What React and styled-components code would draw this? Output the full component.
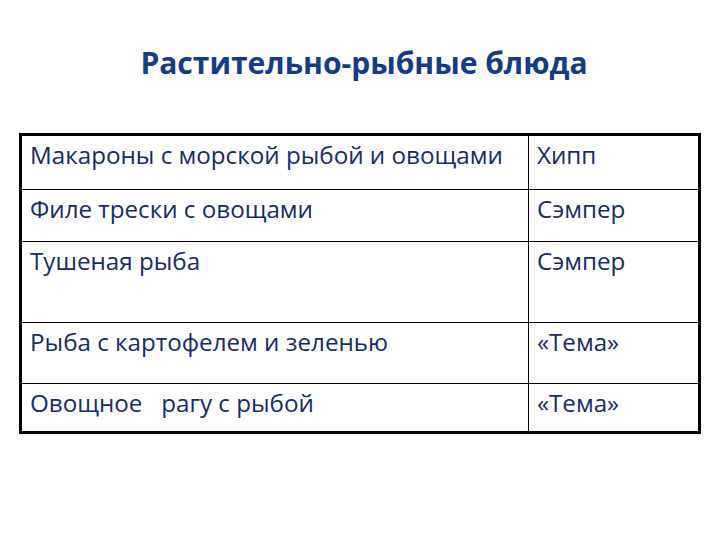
import React from "react";
import styled, { createGlobalStyle } from "styled-components";

const Global = createGlobalStyle`
  html, body { margin: 0; padding: 0; background: #ffffff; }
  body { font-family: "Open Sans", "Noto Sans", sans-serif; }
`;

const Page = styled.div`
  width: 720px;
  height: 540px;
  box-sizing: border-box;
  padding: 43px 19px 0 19px;
  display: flex;
  flex-direction: column;
  align-items: flex-start;
`;

const Title = styled.h1`
  margin: 0 0 50px 0;
  align-self: stretch;
  text-align: center;
  font-family: "Open Sans", "Noto Sans", sans-serif;
  font-weight: 700;
  font-size: 30px;
  line-height: 40px;
  color: #133b8a;
  padding-left: 8px;
`;

const Table = styled.table`
  border-collapse: collapse;
  border: 3px solid #000;
  table-layout: fixed;
`;

const Row = styled.tr`
  height: ${(p) => p.$h}px;
`;

const Cell = styled.td`
  border: 1px solid #000;
  vertical-align: top;
  padding: 4px 0 0 8px;
  font-family: "Open Sans", "Noto Sans", sans-serif;
  font-size: 24.2px;
  line-height: 30px;
  color: #172c66;
  white-space: pre;
  overflow: hidden;
  width: ${(p) => p.$w}px;
`;

const rows = [
  ["Макароны с морской рыбой и овощами", "Хипп", 55],
  ["Филе трески с овощами", "Сэмпер", 52],
  ["Тушеная рыба", "Сэмпер", 81],
  ["Рыба с картофелем и зеленью", "«Тема»", 61],
  ["Овощное   рагу с рыбой", "«Тема»", 49],
];

export default function App() {
  return (
    <>
      <Global />
      <Page>
        <Title>Растительно-рыбные блюда</Title>
        <Table>
          <tbody>
            {rows.map(([a, b, h]) => (
              <Row key={a} $h={h}>
                <Cell $w={498}>{a}</Cell>
                <Cell $w={161}>{b}</Cell>
              </Row>
            ))}
          </tbody>
        </Table>
      </Page>
    </>
  );
}
